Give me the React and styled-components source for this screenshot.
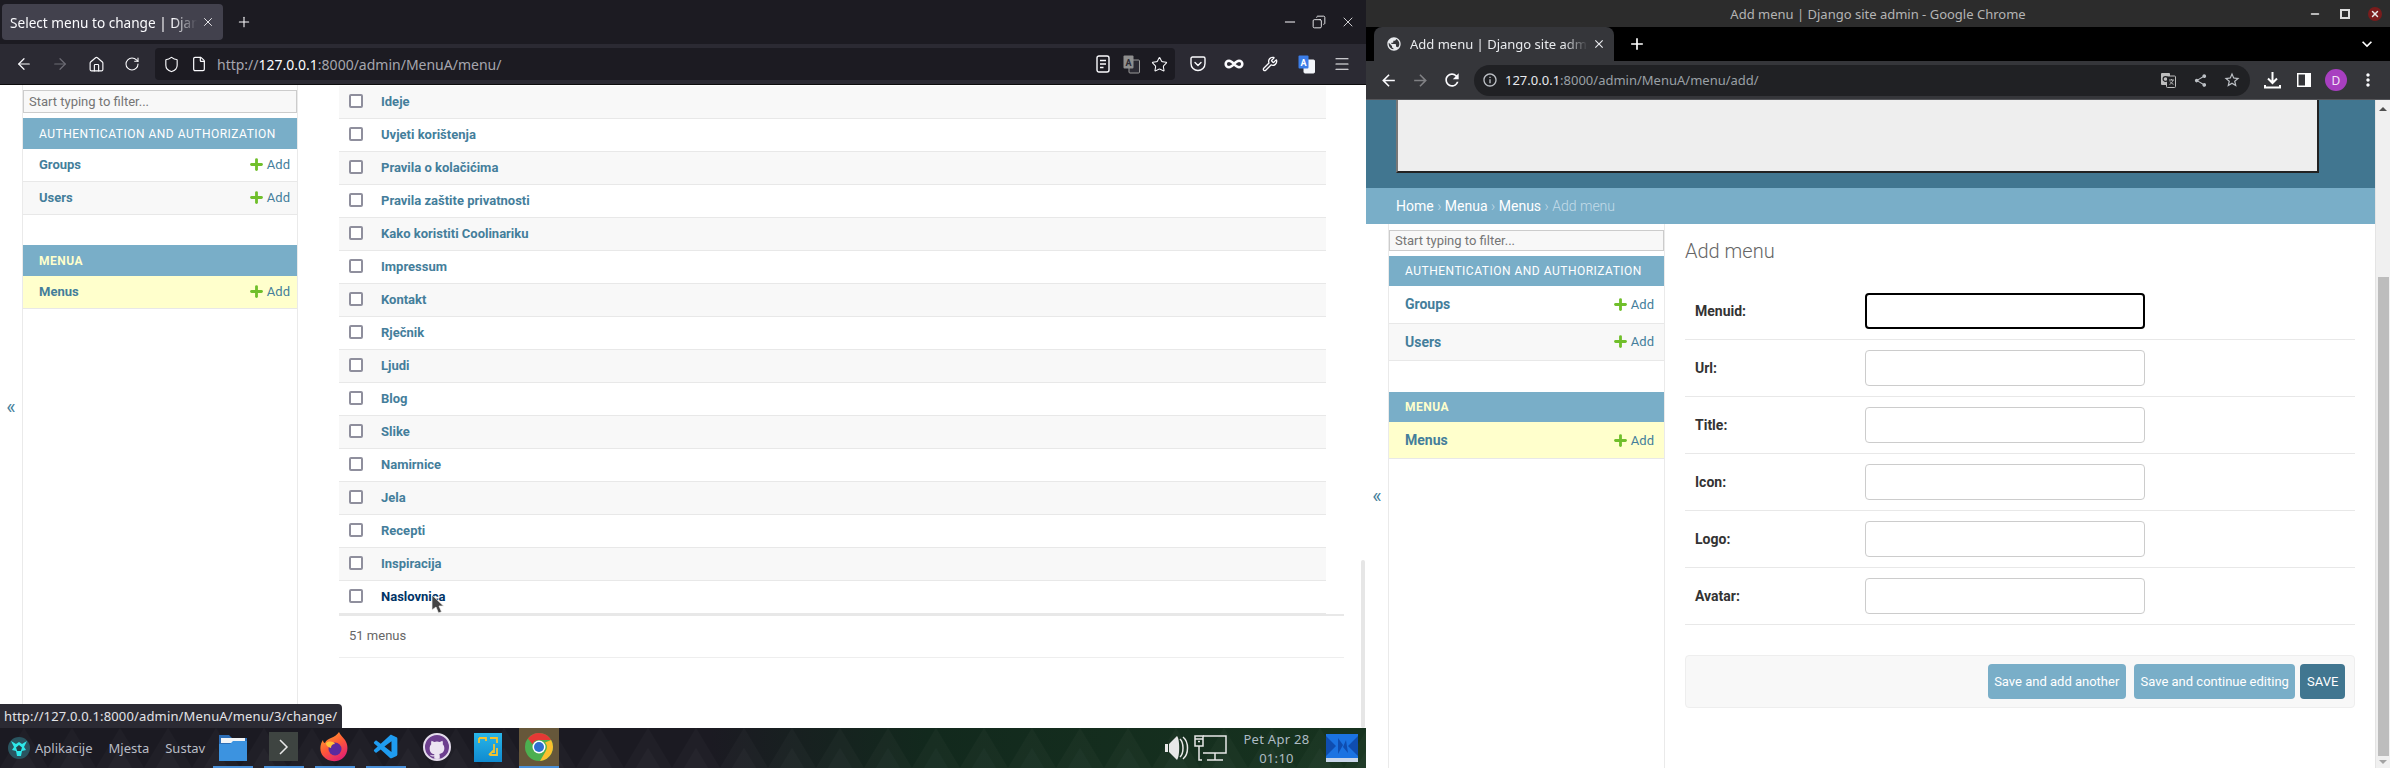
import styled, { createGlobalStyle } from "styled-components";
import { ArrowLeft, ArrowRight, Home, RotateCw, Shield, File, Star, Infinity as InfinityIcon, Wrench, Menu, Minus, X, Plus, Copy } from "lucide-react";
import { MdArrowBack, MdArrowForward, MdRefresh, MdInfoOutline, MdShare, MdStarBorder, MdPublic, MdClose, MdAdd, MdKeyboardArrowDown, MdMoreVert } from "react-icons/md";
import { VscVscode } from "react-icons/vsc";

const menuNames = [
  "Ideje", "Uvjeti korištenja", "Pravila o kolačićima", "Pravila zaštite privatnosti",
  "Kako koristiti Coolinariku", "Impressum", "Kontakt", "Rječnik", "Ljudi", "Blog",
  "Slike", "Namirnice", "Jela", "Recepti", "Inspiracija", "Naslovnica",
];

const formFields = ["Menuid", "Url", "Title", "Icon", "Logo", "Avatar"];

const GlobalStyle = createGlobalStyle`
  html, body { margin: 0; padding: 0; background: #fff; }
  * { box-sizing: border-box; }
`;

const Desktop = styled.div`
  display: flex;
  width: 2390px;
  height: 768px;
  overflow: hidden;
  font-family: Roboto, "Liberation Sans", sans-serif;
  color: #333;
`;

const Pane = styled.div`
  position: relative;
  display: flex;
  flex-direction: column;
  flex: none;
  width: ${(p) => p.$width}px;
  height: 768px;
  overflow: hidden;
`;

/* firefox window */
const FoxTabs = styled.div`
  display: flex;
  align-items: center;
  flex: none;
  height: 44px;
  padding-left: 2px;
  background: #1c1b22;
  color: #fbfbfe;
`;

const FoxTab = styled.div`
  position: relative;
  display: flex;
  align-items: center;
  width: 221px;
  height: 36px;
  padding-left: 8px;
  border-radius: 4px;
  background: #42414d;
  font: 13.6px "Noto Sans", sans-serif;
`;

const TabTitle = styled.span`
  flex: 1;
  overflow: hidden;
  white-space: nowrap;
  mask-image: linear-gradient(90deg, #000 85%, transparent 98%);
`;

const TabClose = styled.span`
  display: flex;
  width: 22px;
  flex: none;
`;

const NewTab = styled.span`
  display: flex;
  margin-left: 13px;
`;

const WindowButtons = styled.div`
  display: flex;
  align-items: center;
  margin-left: auto;
  gap: ${(p) => p.$gap}px;
  padding-right: ${(p) => p.$right}px;
`;

const FoxToolbar = styled.div`
  display: flex;
  align-items: center;
  flex: none;
  height: 41px;
  padding: 0 6px;
  background: #2b2a33;
  border-bottom: 1px solid #0c0c0d;
`;

const ToolIcon = styled.span`
  display: flex;
  align-items: center;
  justify-content: center;
  flex: none;
  width: ${(p) => p.$size || 36}px;
  height: 32px;
  color: ${(p) => p.$color || "#fbfbfe"};
`;

const FoxUrl = styled.div`
  display: flex;
  align-items: center;
  flex: 1;
  height: 32px;
  margin: 0 5px;
  padding: 0 2px;
  border-radius: 4px;
  background: #1c1b22;
`;

const FoxUrlText = styled.span`
  flex: 1;
  padding-left: 4px;
  font: 14px "Noto Sans", sans-serif;
  color: #a6a6ae;
  b { font-weight: 400; color: #fbfbfe; }
`;

const FoxPage = styled.div`
  display: flex;
  flex: 1;
  min-height: 0;
  background: #fff;
`;

const Collapse = styled.div`
  display: flex;
  align-items: center;
  justify-content: center;
  flex: none;
  width: 22px;
  font-size: 20px;
  color: #447e9b;
`;

const Sidebar = styled.nav`
  flex: none;
  width: ${(p) => p.$width}px;
  border-right: 1px solid #eaeaea;
  border-left: 1px solid #eaeaea;
`;

const FilterInput = styled.input`
  display: block;
  width: 100%;
  height: ${(p) => p.$height}px;
  margin: ${(p) => p.$top}px 0 5px;
  padding: 2px 5px;
  border: 1.5px solid #ccc;
  background: #f8f8f8;
  font: 13px Roboto, sans-serif;
  &::placeholder { color: #757575; opacity: 1; }
`;

const Module = styled.section`
  margin-bottom: ${(p) => p.$gap}px;
`;

const Caption = styled.div`
  display: flex;
  align-items: center;
  height: ${(p) => p.$height}px;
  padding-left: 16px;
  background: #79aec8;
  font-size: 12px;
  font-weight: ${(p) => (p.$current ? 700 : 400)};
  letter-spacing: 0.5px;
  text-transform: uppercase;
  color: ${(p) => (p.$current ? "#ffc" : "#fff")};
`;

const SideRow = styled.div`
  display: flex;
  align-items: center;
  justify-content: space-between;
  height: ${(p) => p.$height}px;
  padding: 0 ${(p) => p.$right}px ${(p) => (p.$lift ? 2 : 0)}px 16px;
  border-bottom: 1px solid #e8e8e8;
  background: ${(p) => p.$bg};
  font-size: ${(p) => p.$font}px;
  font-weight: 700;
  color: #447e9b;
`;

const AddLink = styled.span`
  display: flex;
  align-items: center;
  gap: 1.5px;
  font-size: 13px;
  font-weight: 400;
  color: #447e9b;
  svg { color: #70bf2b; }
`;

const Changelist = styled.main`
  flex: none;
  width: 1005px;
  margin-left: 41px;
  padding-top: 1px;
`;

const ResultTable = styled.div`
  width: 987px;
`;

const ResultRow = styled.div`
  display: flex;
  align-items: center;
  height: 33px;
  padding: 0 0 2px 10px;
  border-bottom: 1px solid #e8e8e8;
  background: ${(p) => (p.$odd ? "#f8f8f8" : "#fff")};
  font-size: 13px;
  font-weight: 700;
  color: ${(p) => (p.$hover ? "#036" : "#447e9b")};
`;

const RowCheck = styled.input`
  appearance: none;
  flex: none;
  width: 14px;
  height: 14px;
  margin: 0 18px 0 0;
  border: 2px solid #8f8f9d;
  border-radius: 2px;
  background: #fff;
`;

const Paginator = styled.div`
  display: flex;
  align-items: center;
  height: 44px;
  padding: 0 0 2px 10px;
  border-top: 2px solid #e8e8e8;
  border-bottom: 1px solid #eee;
  font-size: 13px;
  color: #666;
`;

const SlimScroll = styled.div`
  align-self: flex-end;
  flex: none;
  width: 4px;
  height: 168px;
  margin-left: 17px;
  border-radius: 2px;
  background: #e6e6e6;
`;

const StatusTip = styled.div`
  position: absolute;
  left: 0;
  bottom: 40px;
  width: 342px;
  height: 24px;
  padding: 3px 0 0 4px;
  border-radius: 0 4px 0 0;
  background: #2b2a33;
  font: 13px "Noto Sans", sans-serif;
  letter-spacing: 0.15px;
  white-space: nowrap;
  color: #e4e4e8;
`;

const MouseCursor = styled.svg`
  position: absolute;
  left: 431px;
  top: 594px;
`;

/* panel at the bottom */
const Taskbar = styled.footer`
  position: relative;
  display: flex;
  align-items: center;
  flex: none;
  height: 40px;
  padding: 0 8px;
  background: linear-gradient(90deg, #1b1a22 0, #1b1a22 52%, #12291d 68%, #17331f 100%);
  color: #b9bdc6;
  font: 13px "Noto Sans", sans-serif;
`;

const Wallpaper = styled.svg`
  position: absolute;
  inset: 0;
  width: 100%;
  height: 100%;
`;

const PanelMenu = styled.span`
  position: relative;
  flex: none;
  margin-left: ${(p) => p.$left}px;
`;

const LogoWrap = styled.span`
  position: relative;
  display: flex;
  flex: none;
  margin-left: ${(p) => p.$left || 0}px;
`;

const Launchers = styled.div`
  position: relative;
  display: flex;
  gap: 11px;
  margin-left: 8px;
`;

const Launcher = styled.span`
  display: flex;
  align-items: center;
  justify-content: center;
  width: 40px;
  height: 40px;
  border-bottom: 2px solid ${(p) => (p.$running ? "#4a90d9" : "transparent")};
  background: ${(p) => (p.$active ? "#66573a" : "transparent")};
`;

const GitBadge = styled.span`
  display: flex;
  align-items: flex-end;
  justify-content: center;
  width: 28px;
  height: 28px;
  overflow: hidden;
  border: 2px solid #e4dcec;
  border-radius: 50%;
  background: #6d3f8f;
`;

const Tray = styled.div`
  position: relative;
  display: flex;
  align-items: center;
  margin-left: auto;
`;

const Clock = styled.div`
  width: 99px;
  margin-top: 2px;
  text-align: center;
  line-height: 19px;
  letter-spacing: 0.3px;
  color: #aebcc4;
`;

/* chrome window */
const ChromeTitle = styled.div`
  display: grid;
  grid-template-columns: 1fr auto 1fr;
  align-items: center;
  flex: none;
  height: 27px;
  background: #2c2c2c;
  font: 13px "Noto Sans", sans-serif;
  color: #b4b4b4;
`;

const WinDot = styled.span`
  display: flex;
  align-items: center;
  justify-content: center;
  width: 14px;
  height: 14px;
  border-radius: 50%;
  background: ${(p) => p.$bg || "transparent"};
  color: #e8e8e8;
`;

const ChromeTabs = styled.div`
  display: flex;
  align-items: center;
  flex: none;
  height: 34px;
  padding: 0 8px;
  background: #000;
  color: #fff;
`;

const ChromeTab = styled.div`
  display: flex;
  align-items: center;
  align-self: stretch;
  width: 240px;
  padding: 0 8px 0 12px;
  border-radius: 8px 8px 0 0;
  background: #35363a;
  font: 13px "Noto Sans", sans-serif;
  color: #e8eaed;
  svg { flex: none; }
`;

const ChromeTabTitle = styled(TabTitle)`
  padding-left: 8px;
`;

const ChromeToolbar = styled.div`
  display: flex;
  align-items: center;
  flex: none;
  height: 39px;
  padding: 0 6px;
  background: #35363a;
  border-bottom: 1px solid #55565a;
`;

const ChromeUrl = styled.div`
  display: flex;
  align-items: center;
  flex: 1;
  height: 31px;
  margin: 0 6px;
  padding: 0 2px 0 8px;
  border-radius: 16px;
  background: #202124;
`;

const ChromeUrlText = styled.span`
  flex: 1;
  padding-left: 7px;
  font: 13px "Noto Sans", sans-serif;
  color: #9aa0a6;
  b { font-weight: 400; color: #e8eaed; }
`;

const Avatar = styled.span`
  display: flex;
  align-items: center;
  justify-content: center;
  width: 22px;
  height: 22px;
  border-radius: 50%;
  background: #a83fc0;
  font: 12px "Noto Sans", sans-serif;
  color: #f3e3f7;
`;

const AdminBody = styled.div`
  display: flex;
  flex: 1;
  min-height: 0;
`;

const AdminScroll = styled.div`
  display: flex;
  flex-direction: column;
  flex: 1;
  min-width: 0;
`;

const AdminHeader = styled.header`
  flex: none;
  height: 88px;
  padding: 0 56px 15px 30px;
  background: #417690;
`;

const HeaderBox = styled.div`
  height: 100%;
  border-right: 2px solid #222;
  border-bottom: 2px solid #222;
  border-left: 2px solid #777;
  background: #eee;
`;

const Breadcrumbs = styled.div`
  display: flex;
  align-items: center;
  gap: 3.5px;
  flex: none;
  height: 36px;
  padding-left: 30px;
  background: #79aec8;
  font-size: 14px;
  font-weight: 300;
  color: #c4dce8;
  a { color: #fff; font-weight: 400; }
`;

const AdminPage = styled.div`
  display: flex;
  flex: 1;
  min-height: 0;
`;

const AddForm = styled.main`
  flex: 1;
  min-width: 0;
  padding: 15px 20px 0;
`;

const Heading = styled.h1`
  margin: 0 0 20px;
  font-size: 20px;
  font-weight: 300;
  line-height: 24px;
  color: #666;
`;

const FormRow = styled.div`
  display: flex;
  align-items: center;
  height: 57px;
  padding-left: 10px;
  border-bottom: 1px solid #e8e8e8;
`;

const FieldLabel = styled.label`
  flex: none;
  width: 170px;
  font-size: 14px;
  font-weight: 700;
  color: #333;
`;

const TextField = styled.input`
  width: 280px;
  height: 36px;
  border: ${(p) => (p.$focused ? "2px solid #000" : "1px solid #ccc")};
  border-radius: 4px;
  background: #fff;
`;

const SubmitRow = styled.div`
  display: flex;
  justify-content: flex-end;
  align-items: center;
  height: 53px;
  margin-top: 30px;
  padding-right: 9px;
  border: 1px solid #eee;
  border-radius: 4px;
  background: #f8f8f8;
`;

const SaveButton = styled.button`
  height: 35px;
  margin-left: ${(p) => p.$gap}px;
  padding: 0 6.6px;
  border: 0;
  border-radius: 4px;
  background: ${(p) => (p.$primary ? "#417690" : "#79aec8")};
  font: 13px Roboto, sans-serif;
  color: #fff;
`;

const PageScrollbar = styled.div`
  display: flex;
  flex-direction: column;
  align-items: center;
  flex: none;
  width: 15px;
  border-left: 1px solid #e4e4e4;
  background: #f0f0f0;
`;

const ScrollThumb = styled.div`
  width: 11px;
  height: 479px;
  margin-top: 166px;
  background: #bdbdbd;
`;

const ScrollArrow = styled.span`
  width: 0;
  height: 0;
  margin-top: ${(p) => p.$top}px;
  border-right: 4px solid transparent;
  border-left: 4px solid transparent;
  ${(p) => (p.$up ? "border-bottom: 4px solid #505050;" : "border-top: 4px solid #a3a3a3;")}
`;

/* small drawings */
function TranslateIcon({ blue }) {
  return (
    <svg width="17" height="19" viewBox="0 0 17 19">
      <rect x="6" y="5" width="10.5" height="13" rx="1" fill={blue ? "#f4f6fb" : "#2b2a33"} stroke={blue ? "#f4f6fb" : "#9a9a9a"} />
      <rect x="0.5" y="0.5" width="10" height="13" rx="1" fill={blue ? "#3b7de8" : "#8f8f8f"} />
      <text x="2.6" y="10.5" fontSize="9" fontWeight="700" fontFamily="Roboto" fill={blue ? "#fff" : "#2b2a33"}>A</text>
    </svg>
  );
}

function ChromeTranslateIcon() {
  return (
    <svg width="15" height="15" viewBox="0 0 15 15">
      <rect x="0" y="0" width="9" height="12" rx="1" fill="#bdbdbd" />
      <rect x="5.5" y="3" width="9" height="11.5" rx="1" fill="#202124" stroke="#bdbdbd" />
      <circle cx="4.5" cy="6" r="2.4" fill="none" stroke="#202124" strokeWidth="1.2" />
      <path d="M8 7h5M10.5 6v1M12 7c-.6 2.4-2 3.6-3.5 4.4M9 8.5c.8 1.4 2 2.3 3.5 2.8" stroke="#bdbdbd" strokeWidth=".9" fill="none" />
    </svg>
  );
}

function ReaderIcon() {
  return (
    <svg width="14" height="18" viewBox="0 0 14 18" fill="none" stroke="#fbfbfe" strokeWidth="1.4">
      <rect x="1" y="1" width="12" height="16" rx="2" />
      <path d="M4 5.5h6M4 9h6M4 12.5h3.5" />
    </svg>
  );
}

function PocketIcon() {
  return (
    <svg width="16" height="16" viewBox="0 0 16 16" fill="none" stroke="#fbfbfe" strokeWidth="1.4" strokeLinecap="round" strokeLinejoin="round">
      <path d="M1 2.5c0-.8.6-1.5 1.5-1.500h11c.9 0 1.500.7 1.500 1.500v5c0 4-3.200 7-7 7s-7-3-7-7z" />
      <path d="M5 6.500l3 3 3-3" />
    </svg>
  );
}

function SidePanelIcon() {
  return (
    <svg width="14" height="14" viewBox="0 0 14 14">
      <rect width="14" height="14" fill="#fff" />
      <rect x="1.5" y="1.5" width="6.5" height="11" fill="#35363a" />
    </svg>
  );
}

function DownloadIcon() {
  return (
    <svg width="17" height="17" viewBox="0 0 17 17" fill="none" stroke="#fff" strokeWidth="2">
      <path d="M8.5 0v10M4 6.500l4.500 4.500 4.500-4.500" />
      <path d="M1 13v2.500h15V13" />
    </svg>
  );
}

function KdeLogo() {
  return (
    <svg width="22" height="22" viewBox="0 0 22 22">
      <circle cx="11" cy="11" r="11" fill="#2a5560" />
      <path d="M3 4l5 3 3-2 3 2 5-3-3 6 2 3-4 1-1 5h-4l-1-5-4-1 2-3z" fill="#2ee8ea" />
      <path d="M11 8l3 2.500-1.200 3.500h-3.600L8 10.500z" fill="#22424a" />
    </svg>
  );
}

function FolderIcon() {
  return (
    <svg width="30" height="30" viewBox="0 0 30 30">
      <path d="M1 3h10l3 3h15v23H1z" fill="#2c6db5" />
      <rect x="3" y="6" width="24" height="5" fill="#f2f4f6" />
      <path d="M1 12h11l3-3h14v20H1z" fill="#3c93e0" />
    </svg>
  );
}

function TerminalIcon() {
  return (
    <svg width="30" height="30" viewBox="0 0 30 30">
      <rect width="29" height="29" fill="#3e4441" />
      <path d="M11 8l7 7-7 7" fill="none" stroke="#e8e8e8" strokeWidth="1.5" />
    </svg>
  );
}

function FirefoxIcon() {
  return (
    <svg width="30" height="30" viewBox="0 0 30 30">
      <defs>
        <linearGradient id="foxBody" x1="0" y1="0" x2="0.6" y2="1">
          <stop offset="0" stopColor="#ffb02e" />
          <stop offset="0.55" stopColor="#ff5a36" />
          <stop offset="1" stopColor="#e3246f" />
        </linearGradient>
      </defs>
      <path d="M19 0c1 3 4 5 6 8 4 6 3 14-2 18-6 5-15 4-20-2C-1 19 0 12 3 8c0 2 1 3 2 3 1-3 4-4 6-5 3-1 6-3 8-6z" fill="url(#foxBody)" />
      <circle cx="15" cy="17" r="6.5" fill="#5b2a9e" />
      <path d="M6 11c3-2 7-2 9 1-3 0-4 2-4 4-3-1-5-2-5-5z" fill="#ffc23a" />
    </svg>
  );
}

function GithubCat() {
  return (
    <svg width="22" height="22" viewBox="0 0 24 24" fill="#ece4f2">
      <path d="M6 4l3 1.500a10 10 0 0 1 6 0L18 4c.5 1.500.6 2.800.3 4 1 1.200 1.700 2.600 1.700 4.300 0 4-2.400 5.700-5.500 6.200.5.500.5 1.500.5 2.500V24h-6v-3c-2.500.6-4-.3-5-2 1 .7 2 1.200 5 .8 0-.3 0-.6.1-.9C6 18.300 4 16.500 4 12.300 4 10.600 4.700 9.200 5.700 8 5.400 6.800 5.500 5.500 6 4z" />
    </svg>
  );
}

function FlowIcon() {
  return (
    <svg width="28" height="29" viewBox="0 0 28 29">
      <defs>
        <linearGradient id="flowBg" x1="0" y1="0" x2="0" y2="1">
          <stop offset="0" stopColor="#29b6e8" />
          <stop offset="1" stopColor="#0f8ad0" />
        </linearGradient>
      </defs>
      <rect width="28" height="29" fill="url(#flowBg)" />
      <path d="M5 5h7v3M5 5v5M16 5h7v5M20 11v9M23 15v7h-7M15 22l5-5" fill="none" stroke="#f2c230" strokeWidth="1.8" />
    </svg>
  );
}

function ChromeLogo() {
  return (
    <svg width="28" height="28" viewBox="0 0 28 28">
      <circle cx="14" cy="14" r="14" fill="#4caf50" />
      <path d="M14 0a14 14 0 0 1 12.100 7H14a7 7 0 0 0-6.500 4.300L2.900 5.600A14 14 0 0 1 14 0z" fill="#e53935" />
      <path d="M26.100 7A14 14 0 0 1 15 28l5.500-9.500A7 7 0 0 0 20 9.500z" fill="#fbc02d" />
      <circle cx="14" cy="14" r="6.5" fill="#fff" />
      <circle cx="14" cy="14" r="5" fill="#2f6fd0" />
    </svg>
  );
}

function VolumeIcon() {
  return (
    <svg width="25" height="26" viewBox="0 0 25 26" fill="none">
      <path d="M0 9h3v8H0zM4 9l8-8c3 3 3 21 0 24l-8-8z" fill="#e8e8e8" />
      <path d="M15 4c4 4 4 14 0 18M18 2c6 5 6 17 0 22" stroke="#e8e8e8" strokeWidth="1.5" />
    </svg>
  );
}

function NetworkIcon() {
  return (
    <svg width="33" height="26" viewBox="0 0 33 26" fill="none" stroke="#e8e8e8" strokeWidth="1.5">
      <path d="M9 1h23v17H9M21 18v7M13 25h16M5 11v14h3" />
      <rect x="1" y="1" width="8" height="10" />
      <path d="M1 4h8M4 6.500h2" />
    </svg>
  );
}

function DesktopIcon() {
  return (
    <svg width="32" height="28" viewBox="0 0 32 28">
      <rect width="32" height="28" fill="#1b73e2" />
      <path d="M0 2l10 10L0 22zM32 2L22 12l10 10zM12 4l5 7-5 9zM20 6l-3 7 5 6z" fill="#0f4db0" />
      <rect y="24" width="32" height="4" fill="#c9d6ea" />
    </svg>
  );
}

function PanelPattern() {
  return (
    <Wallpaper>
      <defs>
        <pattern id="tri" width="48" height="40" patternUnits="userSpaceOnUse">
          <path d="M0 40L24 0l24 40z" fill="rgba(255,255,255,0.022)" />
          <path d="M12 40l12-20 12 20z" fill="rgba(255,255,255,0.02)" />
        </pattern>
      </defs>
      <rect width="100%" height="100%" fill="url(#tri)" />
    </Wallpaper>
  );
}

function AppList({ caption, height, rowHeight, font, right, gap, rows, current, lift }) {
  return (
    <Module $gap={gap}>
      <Caption $height={height} $current={current}>{caption}</Caption>
      {rows.map((name, i) => (
        <SideRow
          key={name}
          $height={rowHeight}
          $font={font}
          $right={right}
          $lift={lift}
          $bg={current ? "#ffc" : i % 2 ? "#f8f8f8" : "#fff"}
        >
          {name}
          <AddLink><Plus size={17} strokeWidth={4} />Add</AddLink>
        </SideRow>
      ))}
    </Module>
  );
}

function FirefoxWindow() {
  return (
    <>
      <FoxTabs>
        <FoxTab>
          <TabTitle>Select menu to change | Django site admin</TabTitle>
          <TabClose><X size={14} strokeWidth={1.5} /></TabClose>
        </FoxTab>
        <NewTab><Plus size={16} strokeWidth={1.6} /></NewTab>
        <WindowButtons $gap={14} $right={10}>
          <Minus size={16} strokeWidth={1.5} />
          <Copy size={14} strokeWidth={1.5} style={{ transform: "scaleX(-1)" }} />
          <X size={16} strokeWidth={1.2} />
        </WindowButtons>
      </FoxTabs>
      <FoxToolbar>
        <ToolIcon><ArrowLeft size={18} strokeWidth={1.6} /></ToolIcon>
        <ToolIcon $color="#6d6c75"><ArrowRight size={18} strokeWidth={1.6} /></ToolIcon>
        <ToolIcon><Home size={17} strokeWidth={1.6} /></ToolIcon>
        <ToolIcon><RotateCw size={16} strokeWidth={1.6} /></ToolIcon>
        <FoxUrl>
          <ToolIcon $size={28}><Shield size={17} strokeWidth={1.6} /></ToolIcon>
          <ToolIcon $size={28}><File size={16} strokeWidth={1.8} /></ToolIcon>
          <FoxUrlText>http://<b>127.0.0.1</b>:8000/admin/MenuA/menu/</FoxUrlText>
          <ToolIcon $size={28}><ReaderIcon /></ToolIcon>
          <ToolIcon $size={28}><TranslateIcon /></ToolIcon>
          <ToolIcon $size={28}><Star size={17} strokeWidth={1.5} /></ToolIcon>
        </FoxUrl>
        <ToolIcon><PocketIcon /></ToolIcon>
        <ToolIcon><InfinityIcon size={20} strokeWidth={3} /></ToolIcon>
        <ToolIcon><Wrench size={16} strokeWidth={2} /></ToolIcon>
        <ToolIcon><TranslateIcon blue /></ToolIcon>
        <ToolIcon><Menu size={18} strokeWidth={1.6} /></ToolIcon>
      </FoxToolbar>
      <FoxPage>
        <Collapse>«</Collapse>
        <Sidebar $width={276}>
          <FilterInput $height={23} $top={5} placeholder="Start typing to filter..." />
          <AppList caption="Authentication and Authorization" height={31} rowHeight={33} font={13} right={7} gap={30} rows={["Groups", "Users"]} lift />
          <AppList caption="Menua" height={31} rowHeight={33} font={13} right={7} gap={0} rows={["Menus"]} current lift />
        </Sidebar>
        <Changelist>
          <ResultTable>
            {menuNames.map((name, i) => (
              <ResultRow key={name} $odd={i % 2 === 0} $hover={name === "Naslovnica"}>
                <RowCheck type="checkbox" />
                {name}
              </ResultRow>
            ))}
          </ResultTable>
          <Paginator>51 menus</Paginator>
        </Changelist>
        <SlimScroll />
      </FoxPage>
      <StatusTip>http://127.0.0.1:8000/admin/MenuA/menu/3/change/</StatusTip>
      <MouseCursor width="13" height="20" viewBox="0 0 13 20">
        <path d="M1 1v15l4-3 2.500 6 3-1.300L8 12h4.500z" fill="#444" stroke="#eee" strokeWidth=".7" />
      </MouseCursor>
      <Taskbar>
        <PanelPattern />
        <LogoWrap><KdeLogo /></LogoWrap>
        <PanelMenu $left={5}>Aplikacije</PanelMenu>
        <PanelMenu $left={16}>Mjesta</PanelMenu>
        <PanelMenu $left={16}>Sustav</PanelMenu>
        <Launchers>
          <Launcher $running><FolderIcon /></Launcher>
          <Launcher $running><TerminalIcon /></Launcher>
          <Launcher $running><FirefoxIcon /></Launcher>
          <Launcher $running><VscVscode size={29} color="#1f9cf0" /></Launcher>
          <Launcher><GitBadge><GithubCat /></GitBadge></Launcher>
          <Launcher><FlowIcon /></Launcher>
          <Launcher $running $active><ChromeLogo /></Launcher>
        </Launchers>
        <Tray>
          <VolumeIcon />
          <LogoWrap $left={4}><NetworkIcon /></LogoWrap>
          <Clock>Pet Apr 28<br />01:10</Clock>
          <DesktopIcon />
        </Tray>
      </Taskbar>
    </>
  );
}

function ChromeWindow() {
  return (
    <>
      <ChromeTitle>
        <span />
        <span>Add menu | Django site admin - Google Chrome</span>
        <WindowButtons $gap={16} $right={8}>
          <WinDot><Minus size={12} strokeWidth={3} /></WinDot>
          <WinDot><svg width="10" height="10" viewBox="0 0 10 10"><rect x="1" y="1" width="8" height="8" fill="none" stroke="#ddd" strokeWidth="2" /></svg></WinDot>
          <WinDot $bg="#7a1c1c"><X size={10} strokeWidth={3.5} /></WinDot>
        </WindowButtons>
      </ChromeTitle>
      <ChromeTabs>
        <ChromeTab>
          <MdPublic size={16} />
          <ChromeTabTitle>Add menu | Django site admin</ChromeTabTitle>
          <MdClose size={14} />
        </ChromeTab>
        <NewTab><MdAdd size={20} /></NewTab>
        <WindowButtons $gap={0} $right={5}><MdKeyboardArrowDown size={20} /></WindowButtons>
      </ChromeTabs>
      <ChromeToolbar>
        <ToolIcon $size={32}><MdArrowBack size={19} /></ToolIcon>
        <ToolIcon $size={32} $color="#808184"><MdArrowForward size={19} /></ToolIcon>
        <ToolIcon $size={32}><MdRefresh size={20} /></ToolIcon>
        <ChromeUrl>
          <MdInfoOutline size={16} color="#bdc1c6" />
          <ChromeUrlText><b>127.0.0.1</b>:8000/admin/MenuA/menu/add/</ChromeUrlText>
          <ToolIcon $size={32}><ChromeTranslateIcon /></ToolIcon>
          <ToolIcon $size={32} $color="#bdc1c6"><MdShare size={15} /></ToolIcon>
          <ToolIcon $size={32} $color="#bdc1c6"><MdStarBorder size={18} /></ToolIcon>
        </ChromeUrl>
        <ToolIcon $size={32}><DownloadIcon /></ToolIcon>
        <ToolIcon $size={32}><SidePanelIcon /></ToolIcon>
        <ToolIcon $size={32}><Avatar>D</Avatar></ToolIcon>
        <ToolIcon $size={32}><MdMoreVert size={20} /></ToolIcon>
      </ChromeToolbar>
      <AdminBody>
        <AdminScroll>
          <AdminHeader><HeaderBox /></AdminHeader>
          <Breadcrumbs>
            <a>Home</a>›<a>Menua</a>›<a>Menus</a>›<span>Add menu</span>
          </Breadcrumbs>
          <AdminPage>
            <Collapse>«</Collapse>
            <Sidebar $width={277}>
              <FilterInput $height={21} $top={6} placeholder="Start typing to filter..." />
              <AppList caption="Authentication and Authorization" height={30} rowHeight={37.5} font={14} right={10} gap={31} rows={["Groups", "Users"]} />
              <AppList caption="Menua" height={30} rowHeight={37} font={14} right={10} gap={0} rows={["Menus"]} current />
            </Sidebar>
            <AddForm>
              <Heading>Add menu</Heading>
              {formFields.map((field, i) => (
                <FormRow key={field}>
                  <FieldLabel>{field}:</FieldLabel>
                  <TextField $focused={i === 0} />
                </FormRow>
              ))}
              <SubmitRow>
                <SaveButton $gap={0}>Save and add another</SaveButton>
                <SaveButton $gap={8}>Save and continue editing</SaveButton>
                <SaveButton $gap={5} $primary>SAVE</SaveButton>
              </SubmitRow>
            </AddForm>
          </AdminPage>
        </AdminScroll>
        <PageScrollbar>
          <ScrollArrow $up $top={7} />
          <ScrollThumb />
          <ScrollArrow $top={4} />
        </PageScrollbar>
      </AdminBody>
    </>
  );
}

export default function App() {
  return (
    <>
      <GlobalStyle />
      <Desktop>
        <Pane $width={1366}><FirefoxWindow /></Pane>
        <Pane $width={1024}><ChromeWindow /></Pane>
      </Desktop>
    </>
  );
}
